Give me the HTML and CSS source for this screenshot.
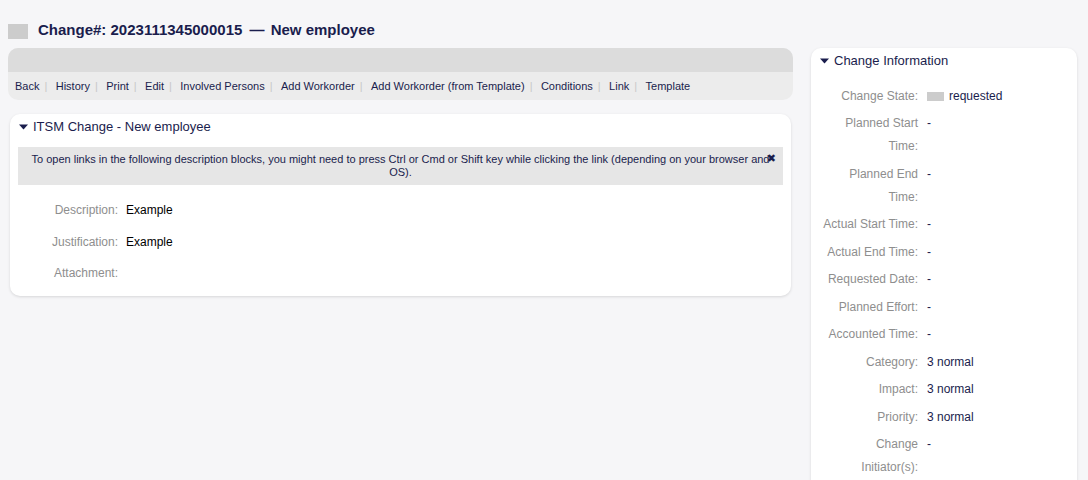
FILE: index.html
```html
<!DOCTYPE html>
<html lang="en">
<head>
<meta charset="utf-8">
<title>Change#: 2023111345000015 — New employee</title>
<link rel="stylesheet" href="styles.css">
</head>
<body>
<header class="page-title">
  <span class="title-icon"></span>
  <h1>Change#: 2023111345000015 <span class="dash">—</span> New employee</h1>
</header>
<div class="layout">
  <main class="main-col">
    <nav class="action-bar">
      <div class="action-bar-top"></div>
      <ul class="actions">
        <li><a href="#">Back</a></li>
        <li><a href="#">History</a></li>
        <li><a href="#">Print</a></li>
        <li><a href="#">Edit</a></li>
        <li><a href="#">Involved Persons</a></li>
        <li><a href="#">Add Workorder</a></li>
        <li><a href="#">Add Workorder (from Template)</a></li>
        <li><a href="#">Conditions</a></li>
        <li><a href="#">Link</a></li>
        <li class="last"><a href="#">Template</a></li>
      </ul>
    </nav>
    <section class="widget main-widget">
      <h2 class="widget-head">
        <svg class="toggle" width="9" height="6" viewBox="0 0 9 6"><path d="M0 0.5h9L4.5 5.5z" fill="#1a1d4d"/></svg>
        ITSM Change - New employee
      </h2>
      <div class="notice">
        <p>To open links in the following description blocks, you might need to press Ctrl or Cmd or Shift key while clicking the link (depending on your browser and OS).</p>
        <span class="notice-close">✖</span>
      </div>
      <dl class="fields">
        <div class="field"><dt>Description:</dt><dd class="plain">Example</dd></div>
        <div class="field"><dt>Justification:</dt><dd class="plain">Example</dd></div>
        <div class="field"><dt>Attachment:</dt><dd></dd></div>
      </dl>
    </section>
  </main>
  <aside class="sidebar">
    <section class="widget side-widget">
      <h2 class="widget-head">
        <svg class="toggle" width="9" height="6" viewBox="0 0 9 6"><path d="M0 0.5h9L4.5 5.5z" fill="#1a1d4d"/></svg>
        Change Information
      </h2>
      <dl class="info">
        <div class="row"><dt>Change State:</dt><dd><span class="state-box"></span>requested</dd></div>
        <div class="row"><dt>Planned Start Time:</dt><dd>-</dd></div>
        <div class="row"><dt>Planned End Time:</dt><dd>-</dd></div>
        <div class="row"><dt>Actual Start Time:</dt><dd>-</dd></div>
        <div class="row"><dt>Actual End Time:</dt><dd>-</dd></div>
        <div class="row"><dt>Requested Date:</dt><dd>-</dd></div>
        <div class="row"><dt>Planned Effort:</dt><dd>-</dd></div>
        <div class="row"><dt>Accounted Time:</dt><dd>-</dd></div>
        <div class="row"><dt>Category:</dt><dd>3 normal</dd></div>
        <div class="row"><dt>Impact:</dt><dd>3 normal</dd></div>
        <div class="row"><dt>Priority:</dt><dd>3 normal</dd></div>
        <div class="row"><dt>Change Initiator(s):</dt><dd>-</dd></div>
      </dl>
    </section>
  </aside>
</div>
</body>
</html>
```

FILE: styles.css
```css
* { box-sizing: border-box; }

html, body {
  margin: 0;
  padding: 0;
  background: #f6f6f8;
  font-family: "Liberation Sans", Arial, sans-serif;
  color: #1a1d4d;
  overflow: hidden;
}

.page-title {
  display: flex;
  align-items: flex-start;
  gap: 10px;
  padding: 21px 8px 0 8px;
  height: 48px;
}

.title-icon {
  display: block;
  width: 20px;
  height: 15px;
  margin-top: 3px;
  background: #cccccc;
}

.page-title h1 {
  margin: 0;
  font-size: 15px;
  line-height: 18px;
  font-weight: bold;
  color: #1a1d4d;
  white-space: nowrap;
}

.dash {
  margin: 0 2px 0 3px;
}

.layout {
  display: flex;
  gap: 18px;
  padding: 0 11px 0 8px;
  align-items: flex-start;
}

.main-col {
  flex: 1;
  min-width: 0;
}

.action-bar {
  border-radius: 10px;
  overflow: hidden;
  background: #ececec;
}

.action-bar-top {
  height: 24px;
  background: #dcdcdc;
}

.actions {
  list-style: none;
  margin: 0;
  padding: 7px;
  display: flex;
  flex-wrap: wrap;
  font-size: 11px;
  line-height: 14px;
}

.actions li::after {
  content: "|";
  color: #c8c8c8;
  padding: 0 8.4px 0 5px;
}

.actions li.last::after { content: none; }

.actions a {
  color: #1a1d4d;
  text-decoration: none;
}

.widget {
  background: #ffffff;
  border-radius: 10px;
  box-shadow: 0 1px 3px rgba(0, 0, 0, 0.13);
}

.main-widget {
  margin: 14px 2px 0 2px;
  padding-bottom: 12px;
}

.widget-head {
  margin: 0;
  padding: 5px 9px 0 9px;
  display: flex;
  align-items: center;
  gap: 5px;
  font-size: 13px;
  line-height: 16px;
  font-weight: normal;
  color: #1a1d4d;
}

.toggle { display: block; flex: none; }

.notice {
  position: relative;
  margin: 12px 8px 0 8px;
  padding: 6px 8px;
  background: #e6e6e6;
}

.notice p {
  margin: 0;
  font-size: 11px;
  line-height: 13px;
  text-align: center;
  color: #1a1d4d;
}

.notice-close {
  position: absolute;
  right: 7px;
  top: 5px;
  font-size: 11px;
  line-height: 13px;
  color: #1a1d4d;
  font-family: "DejaVu Sans", sans-serif;
}

.fields {
  margin: 14px 0 0 0;
  padding: 0;
  display: flex;
  flex-direction: column;
  gap: 9.5px;
}

.field {
  display: flex;
  gap: 8px;
  font-size: 12px;
  line-height: 22px;
}

.field dt {
  width: 108px;
  flex: none;
  padding-left: 12px;
  text-align: right;
  color: #8e8e8e;
}

.field dd {
  margin: 0;
  color: #000000;
}

.sidebar {
  width: 266px;
  flex: none;
}

.side-widget {
  padding-bottom: 20px;
}

.info {
  margin: 15.5px 0 0 0;
  padding: 0 10px;
  display: flex;
  flex-direction: column;
  gap: 4.5px;
}

.row {
  display: flex;
  gap: 9px;
  font-size: 12px;
  line-height: 23px;
}

.row dt {
  width: 97px;
  flex: none;
  text-align: right;
  color: #8e8e8e;
}

.row dd {
  margin: 0;
  color: #1a1d4d;
  display: flex;
  align-items: center;
  align-self: flex-start;
}

.state-box {
  display: inline-block;
  width: 17px;
  height: 9px;
  background: #cccccc;
  margin-right: 5px;
}
```
